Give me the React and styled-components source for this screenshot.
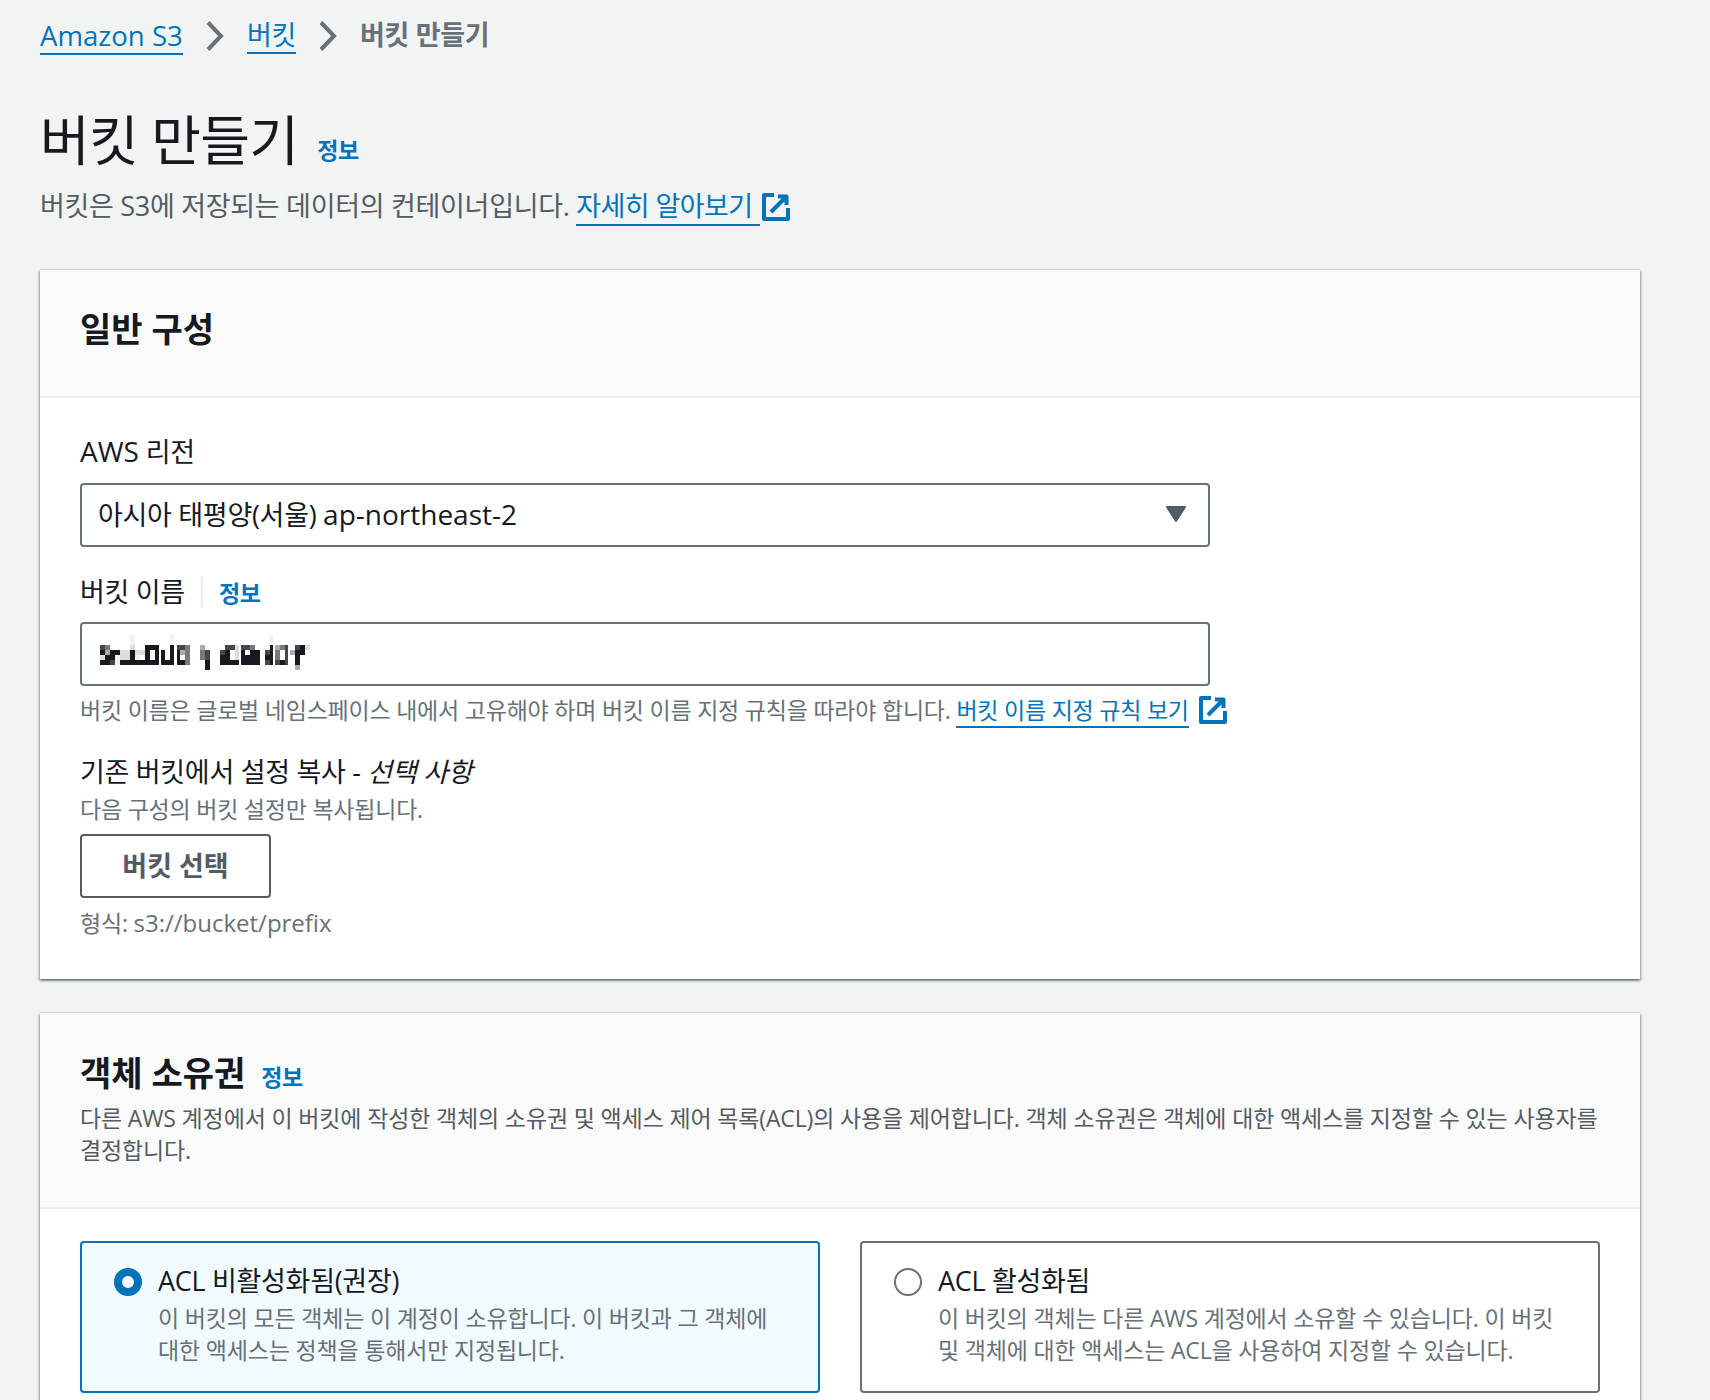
import styled, { createGlobalStyle } from "styled-components";

const GlobalStyle = createGlobalStyle`
  body {
    margin: 0;
    background-color: #f2f3f3;
    font-family: "Open Sans", "Noto Sans CJK KR", sans-serif;
    color: #16191f;
  }
`;

const Page = styled.div`
  width: 1600px;
  height: 1400px;
  overflow: hidden;
  padding: 16px 70px 0 40px;
`;

const Breadcrumb = styled.nav`
  display: flex;
  align-items: center;
  height: 40px;
  font-size: 27px;
  letter-spacing: -0.3px;
`;

const CrumbLink = styled.a`
  color: #0073bb;
  border-bottom: 2px solid #0073bb;
  line-height: 34px;
`;

const CrumbCurrent = styled.span`
  color: #687078;
  font-weight: 700;
  line-height: 34px;
  padding-bottom: 2px;
`;

const Chevron = styled.svg`
  width: 18px;
  height: 30px;
  margin: 0 23px;
  fill: none;
  stroke: #687078;
  stroke-width: 4;
`;

const TitleRow = styled.div`
  display: flex;
  align-items: flex-end;
  gap: 19px;
  margin-top: 48px;
`;

const Title = styled.h1`
  margin: 0;
  font-size: 54px;
  font-weight: 400;
  letter-spacing: -0.7px;
  line-height: 72px;
`;

const Info = styled.a`
  color: #0073bb;
  font-size: 23px;
  font-weight: 700;
  letter-spacing: -0.3px;
`;

const TitleInfo = styled(Info)`
  line-height: 32px;
  margin-bottom: 10px;
`;

const Lead = styled.p`
  margin: 10px 0 0;
  font-size: 27px;
  letter-spacing: -0.3px;
  line-height: 40px;
  color: #545b64;
`;

const TextLink = styled.a`
  color: #0073bb;
  border-bottom: 2px solid #0073bb;
  padding-right: ${(p) => p.$trail || 0}px;
  letter-spacing: ${(p) => p.$track || "inherit"};
`;

const ExternalIcon = styled.svg`
  width: 28px;
  height: 28px;
  margin-left: ${(p) => p.$gap}px;
  vertical-align: -5px;
  fill: none;
  stroke: #0073bb;
  stroke-width: 4;
  stroke-linejoin: round;
`;

const Latin = styled.span`
  font-size: ${(p) => p.$size}px;
  letter-spacing: 0;
`;

const Card = styled.section`
  background-color: #fff;
  margin-top: ${(p) => p.$top}px;
  box-shadow: 0 2px 2px rgba(0, 28, 36, 0.45), 2px 1px 2px rgba(0, 28, 36, 0.15),
    -2px 1px 2px rgba(0, 28, 36, 0.15), 0 -1px 1px rgba(0, 28, 36, 0.1);
`;

const CardHeader = styled.header`
  background-color: #fafafa;
  border-bottom: 2px solid #eaeded;
  padding: ${(p) => p.$pad};
`;

const CardTitleRow = styled.div`
  display: flex;
  align-items: baseline;
  gap: 16px;
`;

const CardTitle = styled.h2`
  margin: 0;
  font-size: 34px;
  font-weight: 700;
  line-height: 44px;
`;

const CardDesc = styled.p`
  margin: 7px 0 0;
  font-size: 23px;
  letter-spacing: -0.15px;
  line-height: 32px;
  color: #545b64;
`;

const CardBody = styled.div`
  padding: ${(p) => p.$pad};
`;

const Label = styled.div`
  margin-top: ${(p) => p.$top || 0}px;
  font-size: 27px;
  letter-spacing: -0.3px;
  line-height: 36px;
`;

const LabelRow = styled.div`
  display: flex;
  align-items: center;
  margin-top: 23px;
  height: 44px;
`;

const Divider = styled.span`
  width: 2px;
  height: 30px;
  background-color: #eaeded;
  margin: 0 16px;
`;

const Field = styled.div`
  display: flex;
  align-items: center;
  justify-content: space-between;
  box-sizing: border-box;
  width: 1130px;
  height: 64px;
  margin-top: ${(p) => p.$top}px;
  padding: 0 16px 3px;
  background-color: #fff;
  border: 2px solid #687078;
  border-radius: 4px;
  font-size: 27px;
  letter-spacing: -0.3px;
`;

const Caret = styled.svg`
  width: 24px;
  height: 20px;
  margin-right: 4px;
  fill: #545b64;
  stroke: #545b64;
  stroke-width: 2;
  stroke-linejoin: round;
`;

const Mosaic = styled.svg`
  width: 210px;
  height: 35px;
  margin-left: 2px;
`;

const Hint = styled.p`
  margin: ${(p) => p.$top}px 0 0;
  font-size: 23px;
  letter-spacing: -0.22px;
  line-height: 32px;
  color: #687078;
`;

const SecondaryButton = styled.button`
  display: block;
  width: 191px;
  height: 64px;
  margin-top: 9px;
  padding: 0 0 4px;
  background-color: #fff;
  border: 2px solid #545b64;
  border-radius: 4px;
  color: #545b64;
  font: 700 27px "Open Sans", "Noto Sans CJK KR", sans-serif;
`;

const RadioGrid = styled.div`
  display: grid;
  grid-template-columns: 1fr 1fr;
  gap: 40px;
`;

const RadioCard = styled.div`
  display: flex;
  gap: 16px;
  box-sizing: border-box;
  height: 152px;
  padding: 20px 32px;
  border: 2px solid ${(p) => (p.$selected ? "#0073bb" : "#687078")};
  border-radius: 4px;
  background-color: ${(p) => (p.$selected ? "#f1faff" : "#fff")};
`;

const RadioDot = styled.span`
  flex: none;
  box-sizing: border-box;
  width: 28px;
  height: 28px;
  margin-top: 5px;
  border-radius: 50%;
  background-color: #fff;
  border: ${(p) => (p.$selected ? "8px solid #0073bb" : "2px solid #687078")};
`;

const RadioTitle = styled.div`
  font-size: 27px;
  letter-spacing: -0.3px;
  line-height: 36px;
`;

const RadioDesc = styled.div`
  margin-top: 3px;
  font-size: 23px;
  letter-spacing: -0.18px;
  line-height: 32px;
  color: #687078;
`;

// bucket name is pixelated in the picture, one string per mosaic row, digit = darkness
const MOSAIC_ROWS = [
  "000000100000001000000000000000000010000000",
  "000000100000001000000000000000000010000000",
  "540000200666006554003000055255400063450562",
  "636622622606606634004500560260660564053660",
  "266122610616606604004500660266660664050600",
  "665166666666666664000600666666660565650600",
  "000000000000000000000600000000000000000300",
];
const MOSAIC_SHADES = ["", "#f2f2f2", "#dcdcdc", "#a9abad", "#77797d", "#44474c", "#16191f"];
// white slits between the letters: [x, width]
const MOSAIC_GAPS = [[59, 2], [74, 3], [139, 2], [162, 3], [173, 2], [188, 2]];

const NameMosaic = () => (
  <Mosaic viewBox="0 0 210 35" shapeRendering="crispEdges">
    {MOSAIC_ROWS.map((row, y) =>
      [...row].map((cell, x) =>
        cell === "0" ? null : (
          <rect key={`${x}-${y}`} x={x * 5} y={y * 5} width="5" height="5" fill={MOSAIC_SHADES[cell]} />
        )
      )
    )}
    {MOSAIC_GAPS.map(([x, w]) => (
      <rect key={x} x={x} y="0" width={w} height="35" fill="#fff" />
    ))}
  </Mosaic>
);

const External = ({ gap }) => (
  <ExternalIcon $gap={gap} viewBox="0 0 28 28">
    <path d="M12 2H2v24h24V15" />
    <path d="M16 3.500h8.500V12" />
    <path d="M24 4L9 19" />
  </ExternalIcon>
);

const CrumbChevron = () => (
  <Chevron viewBox="0 0 18 30">
    <path d="M2 1.500L15 15 2 28.500" />
  </Chevron>
);

const App = () => {
  return (
    <>
      <GlobalStyle />
      <Page>
        <Breadcrumb>
          <CrumbLink>
            <Latin $size={27.6}>Amazon S3</Latin>
          </CrumbLink>
          <CrumbChevron />
          <CrumbLink>버킷</CrumbLink>
          <CrumbChevron />
          <CrumbCurrent>버킷 만들기</CrumbCurrent>
        </Breadcrumb>
        <TitleRow>
          <Title>버킷 만들기</Title>
          <TitleInfo>정보</TitleInfo>
        </TitleRow>
        <Lead>
          버킷은 S3에 저장되는 데이터의 컨테이너입니다.{" "}
          <TextLink $trail={8} $track="-0.6px">자세히 알아보기</TextLink>
          <External gap={2} />
        </Lead>
        <Card $top={44}>
          <CardHeader $pad="37px 40px 45px">
            <CardTitle>일반 구성</CardTitle>
          </CardHeader>
          <CardBody $pad="35px 40px 40px">
            <Label>
              <Latin $size={28}>AWS</Latin> 리전
            </Label>
            <Field $top={13}>
              <span>
                아시아 태평양(서울) <Latin $size={28}>ap-northeast-2</Latin>
              </span>
              <Caret viewBox="0 0 24 20">
                <path d="M3 3h18L12 17z" />
              </Caret>
            </Field>
            <LabelRow>
              <Label>버킷 이름</Label>
              <Divider />
              <Info>정보</Info>
            </LabelRow>
            <Field $top={8}>
              <NameMosaic />
            </Field>
            <Hint $top={8}>
              버킷 이름은 글로벌 네임스페이스 내에서 고유해야 하며 버킷 이름 지정 규칙을 따라야 합니다.{" "}
              <TextLink>버킷 이름 지정 규칙 보기</TextLink>
              <External gap={10} />
            </Hint>
            <Label $top={28}>
              기존 버킷에서 설정 복사 - <em>선택 사항</em>
            </Label>
            <Hint $top={3}>다음 구성의 버킷 설정만 복사됩니다.</Hint>
            <SecondaryButton>버킷 선택</SecondaryButton>
            <Hint $top={9}>
              형식: <Latin $size={24}>s3://bucket/prefix</Latin>
            </Hint>
          </CardBody>
        </Card>
        <Card $top={34}>
          <CardHeader $pad="38px 40px 41px">
            <CardTitleRow>
              <CardTitle>객체 소유권</CardTitle>
              <Info>정보</Info>
            </CardTitleRow>
            <CardDesc>
              다른 AWS 계정에서 이 버킷에 작성한 객체의 소유권 및 액세스 제어 목록(ACL)의 사용을 제어합니다. 객체 소유권은 객체에 대한 액세스를 지정할 수 있는 사용자를 결정합니다.
            </CardDesc>
          </CardHeader>
          <CardBody $pad="32px 40px 60px">
            <RadioGrid>
              <RadioCard $selected>
                <RadioDot $selected />
                <div>
                  <RadioTitle>ACL 비활성화됨(권장)</RadioTitle>
                  <RadioDesc>이 버킷의 모든 객체는 이 계정이 소유합니다. 이 버킷과 그 객체에 대한 액세스는 정책을 통해서만 지정됩니다.</RadioDesc>
                </div>
              </RadioCard>
              <RadioCard>
                <RadioDot />
                <div>
                  <RadioTitle>ACL 활성화됨</RadioTitle>
                  <RadioDesc>이 버킷의 객체는 다른 AWS 계정에서 소유할 수 있습니다. 이 버킷 및 객체에 대한 액세스는 ACL을 사용하여 지정할 수 있습니다.</RadioDesc>
                </div>
              </RadioCard>
            </RadioGrid>
          </CardBody>
        </Card>
      </Page>
    </>
  );
};

export default App;
